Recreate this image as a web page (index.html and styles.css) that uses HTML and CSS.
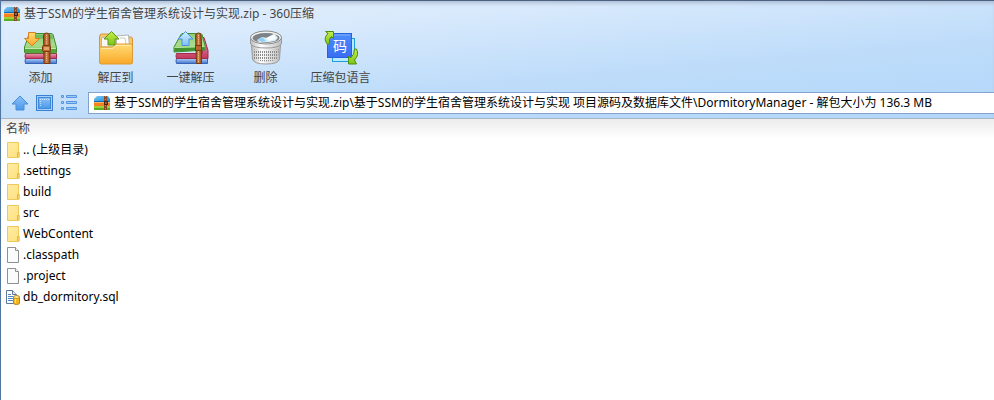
FILE: index.html
```html
<!DOCTYPE html>
<html lang="zh-CN">
<head>
    <meta charset="UTF-8">
    <meta name="viewport" content="width=device-width, initial-scale=1.0">
    <title>基于SSM的学生宿舍管理系统设计与实现.zip - 360压缩</title>
    <link rel="stylesheet" href="styles.css">
</head>
<body>
    <!-- shared icons -->
    <svg class="sprite" width="0" height="0" aria-hidden="true">
        <defs>
            <linearGradient id="g-green" x1="0" y1="0" x2="0" y2="1"><stop offset="0" stop-color="#8ccc78"/><stop offset=".6" stop-color="#a9dc8c"/><stop offset="1" stop-color="#6fbf52"/></linearGradient>
            <linearGradient id="g-red" x1="0" y1="0" x2="0" y2="1"><stop offset="0" stop-color="#ef9ab2"/><stop offset="1" stop-color="#c2385f"/></linearGradient>
            <linearGradient id="g-blue" x1="0" y1="0" x2="0" y2="1"><stop offset="0" stop-color="#b3d0f7"/><stop offset="1" stop-color="#3f74cf"/></linearGradient>
            <linearGradient id="g-belt" x1="0" y1="0" x2="1" y2="0"><stop offset="0" stop-color="#8a4316"/><stop offset=".5" stop-color="#d8894c"/><stop offset="1" stop-color="#8a4316"/></linearGradient>
            <linearGradient id="g-orange" x1="0" y1="0" x2="0" y2="1"><stop offset="0" stop-color="#ffdb74"/><stop offset="1" stop-color="#f9a829"/></linearGradient>
            <linearGradient id="g-sky" x1="0" y1="0" x2="0" y2="1"><stop offset="0" stop-color="#d4efff"/><stop offset="1" stop-color="#7dc0fa"/></linearGradient>
            <linearGradient id="g-lime" x1="0" y1="0" x2="0" y2="1"><stop offset="0" stop-color="#c8ee4c"/><stop offset="1" stop-color="#7dc416"/></linearGradient>
            <linearGradient id="g-nav" x1="0" y1="0" x2="0" y2="1"><stop offset="0" stop-color="#8cc2f8"/><stop offset="1" stop-color="#4b98ea"/></linearGradient>
            <linearGradient id="g-code" x1="0" y1="0" x2="0" y2="1"><stop offset="0" stop-color="#4d8dfb"/><stop offset="1" stop-color="#3b6cf4"/></linearGradient>
            <linearGradient id="g-can" x1="0" y1="0" x2="1" y2="0"><stop offset="0" stop-color="#bdbdbd"/><stop offset=".35" stop-color="#fff"/><stop offset="1" stop-color="#bdbdbd"/></linearGradient>
            <linearGradient id="g-folder" x1="0" y1="0" x2="1" y2="1"><stop offset="0" stop-color="#ffeda6"/><stop offset="1" stop-color="#ffdf7c"/></linearGradient>
            <linearGradient id="g-zip-blue" x1="0" y1="0" x2="1" y2="1"><stop offset="0" stop-color="#7cc8f2"/><stop offset="1" stop-color="#1587d6"/></linearGradient>
            <pattern id="p-holes" width="2" height="3" patternUnits="userSpaceOnUse"><rect width="1" height="2" fill="#8b8b8b"/></pattern>
        </defs>
        <symbol id="zip" viewBox="0 0 16 14">
            <path d="M3 0h11l2 3v3H0V3z" fill="url(#g-zip-blue)"/>
            <path d="M0 5h16v1H0z" fill="#0c6fb9"/>
            <rect y="6" width="16" height="4" fill="#f58220"/>
            <rect y="6" width="16" height="1" fill="#ffb062"/>
            <rect y="10" width="16" height="4" fill="#5cae1c"/>
            <rect y="10" width="16" height="2" fill="#9bd238"/>
            <rect x="10" width="3" height="14" fill="#8a4a28"/>
            <path d="M11.500 0v14" stroke="#c38758" stroke-dasharray="1 2"/>
            <rect x="10" y="5" width="4" height="4" fill="#4b2413"/>
            <path d="M11 7h2" stroke="#d9a274"/>
        </symbol>
        <symbol id="books" viewBox="0 0 34 34">
            <path d="M1.500 27.500h31v5h-31q-1-2.500 0-5z" fill="url(#g-blue)" stroke="#3663b5"/>
            <path d="M1.500 22.500h31v5h-31q-1-2.500 0-5z" fill="url(#g-red)" stroke="#a02b4d"/>
            <path d="M5 3.500q.5-1 2-1h20q1.500 0 2 1l3.500 13v4.500q0 1-1 1h-30q-1 0-1-1v-5z" fill="url(#g-green)" stroke="#3f8c30"/>
            <path d="M1 17h31v4.500H1z" fill="#55a83c"/>
            <path d="M1 17.500h31" stroke="#c3e8ae"/>
            <path d="M6 4h22l1 4H5z" fill="#5fae4c" opacity=".6"/>
            <path d="M19.500 4q1-2 3-2t3 2l.5 9v19.500h-6z" fill="url(#g-belt)" stroke="#7a3b13"/>
            <path d="M22.500 4v10M22.500 21v10" stroke="#efb684" stroke-dasharray="1 1"/>
            <rect x="18.500" y="14.500" width="8" height="6" rx="1" fill="#b8672f" stroke="#7a3b13"/>
            <rect x="20" y="16" width="5" height="3" fill="#e2a26a"/>
        </symbol>
        <symbol id="books-tilt" viewBox="0 0 36 34">
            <path d="M3.500 27.500h31v5h-31q-1-2.500 0-5z" fill="url(#g-blue)" stroke="#3663b5"/>
            <path d="M28 6.500h3l4 13v8H3.500q-1-2.500 0-5h26z" fill="url(#g-red)" stroke="#a02b4d"/>
            <path d="M8 3.500q.5-1 2-1h17q1.500 0 2 1l3 11v4.500l-31 2v-5z" fill="url(#g-green)" stroke="#3f8c30"/>
            <path d="M1.500 17l30-1v3l-30 1.500z" fill="#429230"/>
            <path d="M1.500 16.500l30-1" stroke="#b8e59d"/>
            <path d="M22.500 4q1-2 3-2t2.500 2l.5 9v19.500h-5z" fill="url(#g-belt)" stroke="#7a3b13"/>
            <path d="M25.500 4v27" stroke="#efb684" stroke-dasharray="1 1"/>
            <rect x="22.500" y="14.500" width="6" height="5" fill="#b8672f" stroke="#7a3b13"/>
        </symbol>
        <symbol id="folder" viewBox="0 0 14 16">
            <path d="M1.500 .5h11v9.500h.5v5.500H1.500z" fill="url(#g-folder)" stroke="#edca5b"/>
            <path d="M11.500 15v-4.500h1.500v4.500" fill="#ffe691" stroke="#e4b941"/>
        </symbol>
        <symbol id="file" viewBox="0 0 14 16">
            <path d="M1.500 .5h8l3 3v12h-11z" fill="#fbfbfb" stroke="#8f8f8f"/>
            <path d="M9.500 .5v3h3" fill="#fff" stroke="#8f8f8f"/>
        </symbol>
        <symbol id="sql" viewBox="0 0 14 16">
            <path d="M.5 1.500h6l4 4v9H.5z" fill="#fff" stroke="#5e7894"/>
            <path d="M6.500 1.500v4h4" fill="#dce8f5" stroke="#5e7894"/>
            <path d="M2 5.500h3M2 7.500h6M2 9.500h6M2 11.500h5" stroke="#4d85c5"/>
            <path d="M7.500 8v6q0 1.500 3 1.500t3-1.500V8z" fill="#f3b61f" stroke="#be861a"/>
            <path d="M9.500 9v5" stroke="#ffe68c"/>
            <ellipse cx="10.500" cy="8" rx="3" ry="1.500" fill="#ffe68f" stroke="#c38c1b"/>
        </symbol>
    </svg>

    <div class="window">
        <header class="top">
            <div class="title-bar">
                <svg class="zip-icon" aria-hidden="true"><use href="#zip"/></svg>
                <h1>基于SSM的学生宿舍管理系统设计与实现.zip - 360压缩</h1>
            </div>

            <div class="toolbar">
                <button type="button" class="tool">
                    <svg class="tool-icon" viewBox="0 0 36 36" aria-hidden="true">
                        <use href="#books" x="1" y="1" width="34" height="34"/>
                        <path d="M5.500 2.500h7v6h4l-7.500 7.500-7.500-7.500h4z" fill="url(#g-orange)" stroke="#d9801f"/>
                    </svg>
                    <span>添加</span>
                </button>
                <button type="button" class="tool">
                    <svg class="tool-icon" viewBox="0 0 36 36" aria-hidden="true">
                        <path d="M1.500 33V7q0-3 2-3h8l3 3h18q2 0 2 2v24z" fill="#f8c768" stroke="#d3953c"/>
                        <path d="M3.500 8l10-3 3 12h-13z" fill="#f7f7f7" stroke="#b5b5b5"/>
                        <path d="M18.500 6l12-1 1 12h-13z" fill="#fff" stroke="#b5b5b5"/>
                        <path d="M22 8h5l1 6" fill="none" stroke="#c9c9c9"/>
                        <path d="M1.500 18q0-1 1-1h12l3-3h15q2 0 2 2v16q0 2-2 2h-29q-2 0-2-2z" fill="url(#g-orange)" stroke="#dc9a34"/>
                        <path d="M3 18.500h12l3-3h15" fill="none" stroke="#ffe9a9"/>
                        <path d="M13.500 1.500l7.500 7.500h-4v6h-7v-6h-4z" fill="url(#g-lime)" stroke="#5b9913"/>
                    </svg>
                    <span>解压到</span>
                </button>
                <button type="button" class="tool">
                    <svg class="tool-icon" viewBox="0 0 36 36" aria-hidden="true">
                        <use href="#books-tilt" x="0" y="1" width="36" height="34"/>
                        <path d="M12.500 1.500l7.500 7.500h-4v6.500h-7v-6.500h-4z" fill="url(#g-sky)" stroke="#4a90dc"/>
                    </svg>
                    <span>一键解压</span>
                </button>
                <button type="button" class="tool">
                    <svg class="tool-icon" viewBox="0 0 36 36" aria-hidden="true">
                        <path d="M3.500 15l1 14q1 5 13.500 5t13.500-5l1-14z" fill="url(#g-can)" stroke="#999"/>
                        <path d="M5 19q13 4 26 0l-1 10q-12 5-24 0z" fill="url(#p-holes)"/>
                        <path d="M2.500 7v7q3 4 15.500 4t15.500-4V7z" fill="url(#g-can)" stroke="#999"/>
                        <ellipse cx="18" cy="7.500" rx="15.500" ry="6.500" fill="#f2f2f2" stroke="#8c8c8c"/>
                        <ellipse cx="18" cy="8" rx="13.500" ry="5" fill="#7c8286"/>
                        <path d="M9 10l5-3 5 1 8-4 3 4-3 3q-9 2-16 1z" fill="#d9edf8"/>
                        <path d="M10 10l4-3 4 4-4 1z" fill="#8fd0f4"/>
                        <path d="M18 8l8-4 2 5-7 2z" fill="#f7fcff"/>
                    </svg>
                    <span>删除</span>
                </button>
                <button type="button" class="tool">
                    <svg class="tool-icon" viewBox="0 0 36 36" aria-hidden="true">
                        <rect x="9.500" y="8.500" width="22" height="23" fill="#b9eaff" stroke="#1d9ce3"/>
                        <rect x="4.500" y="3.500" width="24" height="24" fill="url(#g-code)" stroke="#2563dc"/>
                        <path d="M6 5h21" stroke="#7eb0ff"/>
                        <text x="17" y="21" class="code-char">码</text>
                        <path d="M2.500 1.500h8v7l-2-2q-3 2-2 7l-2 1q-5-6 .5-11z" fill="url(#g-lime)" stroke="#4e8e0b"/>
                        <path d="M33.500 19q3 6-2 11l2 4h-8v-8l2 2q4-3 4-9z" fill="url(#g-lime)" stroke="#4e8e0b"/>
                    </svg>
                    <span>压缩包语言</span>
                </button>
            </div>

            <div class="address-row">
                <button type="button" class="nav-button" aria-label="向上">
                    <svg width="18" height="16" viewBox="0 0 18 16" aria-hidden="true">
                        <path d="M9 1l8 8h-4v6H5V9H1z" fill="url(#g-nav)" stroke="#4a8ed9"/>
                    </svg>
                </button>
                <button type="button" class="nav-button" aria-label="预览">
                    <svg width="18" height="16" viewBox="0 0 18 16" aria-hidden="true">
                        <rect x=".5" y=".5" width="16" height="15" fill="#a5d0fb" stroke="#3b80d0"/>
                        <rect x="2.500" y="2.500" width="12" height="11" fill="url(#g-nav)" stroke="#4088d8"/>
                        <path d="M4.500 4v8M6 4.500h8" stroke="#c5e1fd" stroke-dasharray="1 1"/>
                    </svg>
                </button>
                <button type="button" class="nav-button" aria-label="列表">
                    <svg width="16" height="16" viewBox="0 0 16 16" aria-hidden="true">
                        <g fill="#9acaf9" stroke="#5796de">
                            <path d="M.5 .5h2v2h-2zM.5 6.500h2v2h-2zM.5 12.500h2v2h-2z"/>
                            <path d="M5.500 .5h10v2h-10zM5.500 6.500h10v2h-10zM5.500 12.500h10v2h-10z"/>
                        </g>
                    </svg>
                </button>
                <label class="address">
                    <svg class="zip-icon" aria-hidden="true"><use href="#zip"/></svg>
                    <input type="text" aria-label="路径" value="基于SSM的学生宿舍管理系统设计与实现.zip\基于SSM的学生宿舍管理系统设计与实现 项目源码及数据库文件\DormitoryManager - 解包大小为 136.3 MB">
                </label>
            </div>
        </header>

        <main class="files">
            <table class="file-table">
                <thead>
                    <tr><th scope="col">名称</th></tr>
                </thead>
                <tbody>
                    <tr><td><a href="#"><svg class="file-icon" aria-hidden="true"><use href="#folder"/></svg>.. (上级目录)</a></td></tr>
                    <tr><td><a href="#"><svg class="file-icon" aria-hidden="true"><use href="#folder"/></svg>.settings</a></td></tr>
                    <tr><td><a href="#"><svg class="file-icon" aria-hidden="true"><use href="#folder"/></svg>build</a></td></tr>
                    <tr><td><a href="#"><svg class="file-icon" aria-hidden="true"><use href="#folder"/></svg>src</a></td></tr>
                    <tr><td><a href="#"><svg class="file-icon" aria-hidden="true"><use href="#folder"/></svg>WebContent</a></td></tr>
                    <tr><td><a href="#"><svg class="file-icon" aria-hidden="true"><use href="#file"/></svg>.classpath</a></td></tr>
                    <tr><td><a href="#"><svg class="file-icon" aria-hidden="true"><use href="#file"/></svg>.project</a></td></tr>
                    <tr><td><a href="#"><svg class="file-icon" aria-hidden="true"><use href="#sql"/></svg>db_dormitory.sql</a></td></tr>
                </tbody>
            </table>
        </main>
    </div>
</body>
</html>
```
FILE: styles.css
```css
* {
    box-sizing: border-box;
}
body {
    margin: 0;
    background-color: #fff;
    color: #000;
    font-family: "Noto Sans", "Noto Sans CJK SC", sans-serif;
    font-size: 12px;
    line-height: 20px;
}
button, input {
    font: inherit;
    color: inherit;
}
.sprite {
    display: block;
}
.window {
    display: flex;
    flex-direction: column;
    min-height: 100vh;
    border-left: 1px solid #50759f;
}
.top {
    border-top: 1px solid #4b6280;
    border-bottom: 1px solid #a9b5c4;
    background: linear-gradient(175deg, #e3effc 0%, #d9eafc 25%, #bfddfa 60%, #b2d6fa 100%);
    box-shadow: inset 0 4px 4px -2px #a9b8d0;
}
.title-bar {
    display: flex;
    align-items: center;
    gap: 4px;
    padding: 3px 3px 0;
}
.title-bar h1 {
    margin: 0;
    font-size: 12px;
    font-weight: normal;
    color: #444;
}
.zip-icon {
    flex: none;
    width: 16px;
    height: 14px;
}
.toolbar {
    display: flex;
    padding: 6px 2px 0;
}
.tool {
    display: flex;
    flex-direction: column;
    align-items: center;
    width: 75px;
    padding: 0;
    border: none;
    background: none;
    color: #444;
    white-space: nowrap;
    cursor: pointer;
}
.tool-icon {
    width: 36px;
    height: 36px;
    margin-bottom: 2px;
}
.code-char {
    fill: #fff;
    font-size: 14px;
    text-anchor: middle;
}
.address-row {
    display: flex;
    align-items: center;
    gap: 7px;
    padding: 4px 0 4px 10px;
}
.nav-button {
    display: flex;
    padding: 0;
    border: none;
    background: none;
    cursor: pointer;
}
.address {
    display: flex;
    flex: 1;
    align-items: center;
    gap: 4px;
    min-width: 0;
    height: 22px;
    margin-left: 4px;
    padding-left: 5px;
    border: 1px solid #83a3cc;
    border-right: none;
    background-color: #fff;
}
.address input {
    flex: 1;
    min-width: 0;
    height: 20px;
    padding: 0;
    border: none;
    outline: none;
    background: none;
}
.files {
    flex: 1;
    background: linear-gradient(#ececec, #fff 20px);
}
.file-table {
    width: 100%;
    border-collapse: collapse;
}
.file-table th {
    height: 20px;
    padding: 0 5px;
    font-weight: normal;
    text-align: left;
    color: #444;
}
.file-table td {
    height: 21px;
    padding: 0 5px;
}
.file-table a {
    display: flex;
    align-items: center;
    gap: 3px;
    color: #000;
    text-decoration: none;
}
.file-icon {
    flex: none;
    width: 14px;
    height: 16px;
}
```
